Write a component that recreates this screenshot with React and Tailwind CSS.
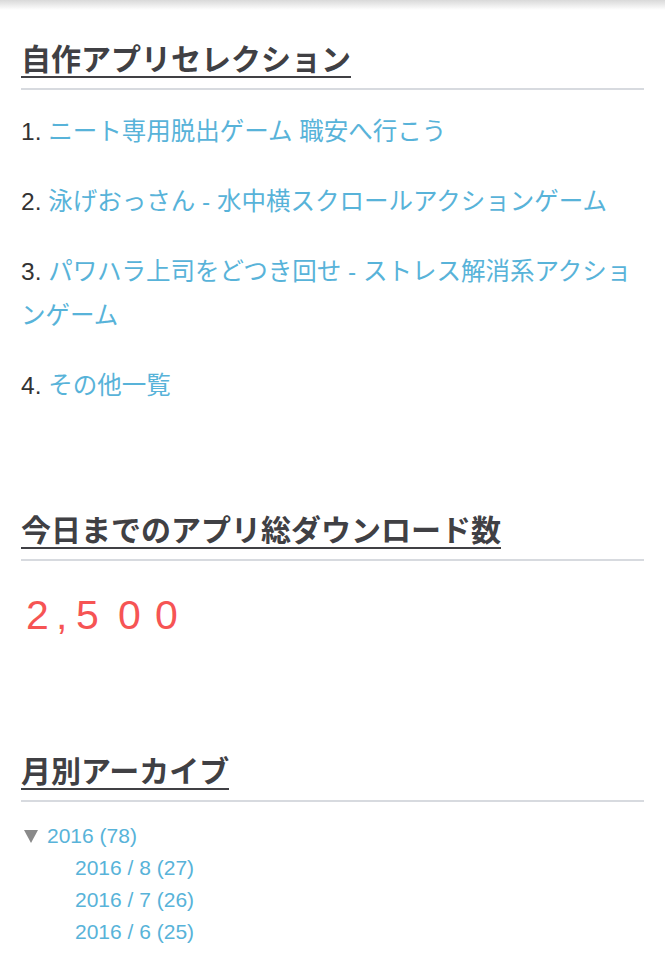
import React from "react";

const apps = [
  { no: "1.", label: "ニート専用脱出ゲーム 職安へ行こう" },
  { no: "2.", label: "泳げおっさん - 水中横スクロールアクションゲーム" },
  { no: "3.", label: "パワハラ上司をどつき回せ - ストレス解消系アクションゲーム" },
  { no: "4.", label: "その他一覧" },
];

const months = ["2016 / 8 (27)", "2016 / 7 (26)", "2016 / 6 (25)"];

const font = { fontFamily: '"Liberation Sans", "Noto Sans CJK JP", sans-serif' };

function Heading({ children }) {
  return (
    <h2 className="flex pb-[10px] border-b-2 border-[#d7dadf]">
      <span className="text-[30px] leading-[33px] font-bold text-[#404044] border-b-2 border-[#404044]">
        {children}
      </span>
    </h2>
  );
}

export default function App() {
  return (
    <div className="w-[665px] min-h-[974px] bg-white" style={font}>
      <div className="h-[10px] bg-gradient-to-b from-[#d9d9d9] to-white" />
      <div className="px-[21px] pt-[33px]">
        {/* app selection */}
        <section>
          <Heading>自作アプリセレクション</Heading>
          <ol className="mt-[20px] flex flex-col gap-[26px] text-[24.5px] leading-[44px]">
            {apps.map((a) => (
              <li key={a.no} className="text-[#333]">
                {a.no} <a className="text-[#58b3d9]">{a.label}</a>
              </li>
            ))}
          </ol>
        </section>

        {/* downloads: counter digits */}
        <section className="mt-[106px]">
          <Heading>今日までのアプリ総ダウンロード数</Heading>
          <div className="mt-[29px] pl-[5px] flex text-[41px] leading-[50px] text-[#f65454]">
            <span className="w-[30px]">2</span>
            <span className="w-[20px]">,</span>
            <span className="w-[42px]">5</span>
            <span className="w-[37px]">0</span>
            <span>0</span>
          </div>
        </section>

        {/* archive */}
        <section className="mt-[115px]">
          <Heading>月別アーカイブ</Heading>
          <ul className="mt-[18px] text-[21px] leading-[32px] text-[#58b3d9]">
            <li className="flex items-center">
              <svg width="14" height="13" viewBox="0 0 14 13" className="ml-[3px] mr-[9px]">
                <path d="M0 0H14L7 13Z" fill="#8a8a8a" />
              </svg>
              <span>2016 (78)</span>
            </li>
            {months.map((m) => (
              <li key={m} className="pl-[54px]">
                {m}
              </li>
            ))}
          </ul>
        </section>
      </div>
    </div>
  );
}
